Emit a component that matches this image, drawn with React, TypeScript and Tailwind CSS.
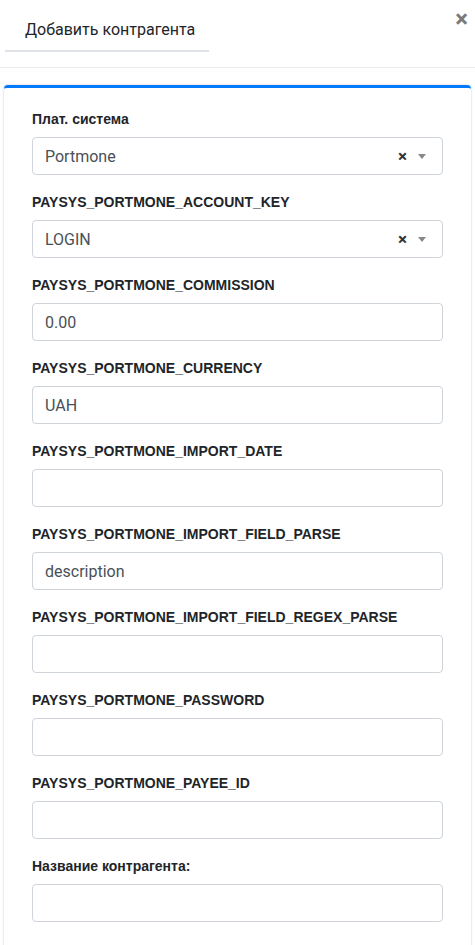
import React from 'react'

const fields: { label: string; value: string; select?: boolean }[] = [
  { label: 'Плат. система', value: 'Portmone', select: true },
  { label: 'PAYSYS_PORTMONE_ACCOUNT_KEY', value: 'LOGIN', select: true },
  { label: 'PAYSYS_PORTMONE_COMMISSION', value: '0.00' },
  { label: 'PAYSYS_PORTMONE_CURRENCY', value: 'UAH' },
  { label: 'PAYSYS_PORTMONE_IMPORT_DATE', value: '' },
  { label: 'PAYSYS_PORTMONE_IMPORT_FIELD_PARSE', value: 'description' },
  { label: 'PAYSYS_PORTMONE_IMPORT_FIELD_REGEX_PARSE', value: '' },
  { label: 'PAYSYS_PORTMONE_PASSWORD', value: '' },
  { label: 'PAYSYS_PORTMONE_PAYEE_ID', value: '' },
  { label: 'Название контрагента:', value: '' },
]

export default function App() {
  return (
    <div className="min-h-screen bg-white font-['Roboto',sans-serif] text-[#212529]">
      {/* header */}
      <div className="relative h-[68px] border-b border-[#e9ecef]">
        <div className="absolute left-[5px] top-0 flex h-[52px] w-[204px] items-center border-b-2 border-[#dee2e6] pl-5 pt-[10px] text-[16px]">
          Добавить контрагента
        </div>
        <button className="absolute right-[7px] top-[7px] text-[24px] font-bold leading-none text-[#7a7a7a]">
          ×
        </button>
      </div>

      {/* card */}
      <div className="mx-1 mt-[17px] rounded-[4px] border-t-[3px] border-[#007bff] bg-white px-7 pb-10 pt-[21px] shadow-[0_0_2px_rgba(0,0,0,0.25)]">
        {fields.map((f) => (
          <div key={f.label} className="mb-[17px]">
            <label className="mb-2 block font-['Liberation_Sans',sans-serif] text-[14px] font-bold leading-[20px] text-[#212529]">
              {f.label}
            </label>
            <div className="flex h-[38px] items-center rounded-[4px] border border-[#ced4da] px-3 pt-[1px] text-[16px] text-[#495057]">
              <span className="flex-1">{f.value}</span>
              {f.select && (
                <div className="flex items-center gap-[11px] pr-1">
                  <span className="text-[17px] font-bold leading-none text-[#333]">×</span>
                  <span className="h-0 w-0 border-x-[4px] border-t-[5px] border-x-transparent border-t-[#888]" />
                </div>
              )}
            </div>
          </div>
        ))}
      </div>
    </div>
  )
}
